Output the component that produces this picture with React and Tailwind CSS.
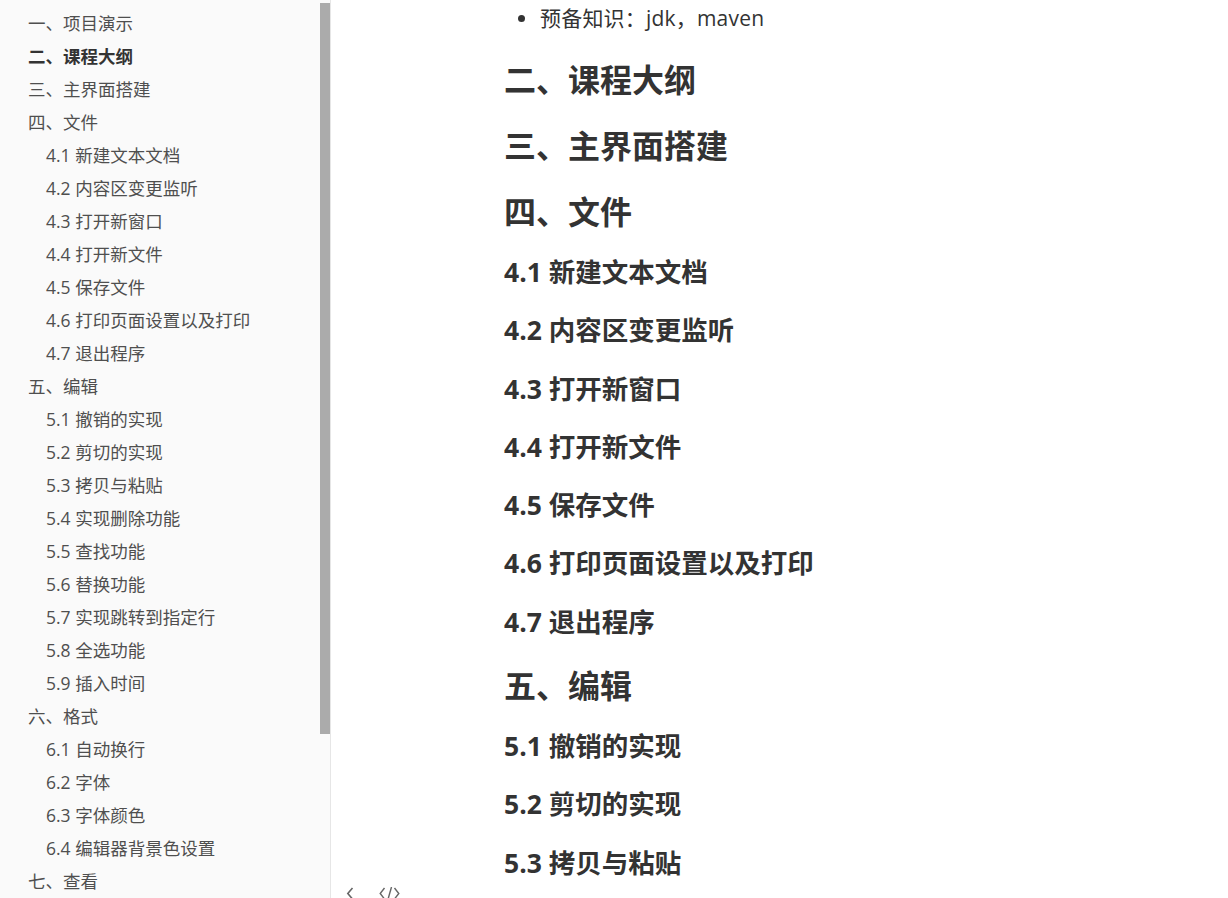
const toc = [
  { t: '一、项目演示', lv: 1 },
  { t: '二、课程大纲', lv: 1, active: true },
  { t: '三、主界面搭建', lv: 1 },
  { t: '四、文件', lv: 1 },
  { t: '4.1 新建文本文档', lv: 2 },
  { t: '4.2 内容区变更监听', lv: 2 },
  { t: '4.3 打开新窗口', lv: 2 },
  { t: '4.4 打开新文件', lv: 2 },
  { t: '4.5 保存文件', lv: 2 },
  { t: '4.6 打印页面设置以及打印', lv: 2 },
  { t: '4.7 退出程序', lv: 2 },
  { t: '五、编辑', lv: 1 },
  { t: '5.1 撤销的实现', lv: 2 },
  { t: '5.2 剪切的实现', lv: 2 },
  { t: '5.3 拷贝与粘贴', lv: 2 },
  { t: '5.4 实现删除功能', lv: 2 },
  { t: '5.5 查找功能', lv: 2 },
  { t: '5.6 替换功能', lv: 2 },
  { t: '5.7 实现跳转到指定行', lv: 2 },
  { t: '5.8 全选功能', lv: 2 },
  { t: '5.9 插入时间', lv: 2 },
  { t: '六、格式', lv: 1 },
  { t: '6.1 自动换行', lv: 2 },
  { t: '6.2 字体', lv: 2 },
  { t: '6.3 字体颜色', lv: 2 },
  { t: '6.4 编辑器背景色设置', lv: 2 },
  { t: '七、查看', lv: 1 },
];

const doc = [
  { t: '二、课程大纲', h: 2 },
  { t: '三、主界面搭建', h: 2 },
  { t: '四、文件', h: 2 },
  { t: '4.1 新建文本文档', h: 3 },
  { t: '4.2 内容区变更监听', h: 3 },
  { t: '4.3 打开新窗口', h: 3 },
  { t: '4.4 打开新文件', h: 3 },
  { t: '4.5 保存文件', h: 3 },
  { t: '4.6 打印页面设置以及打印', h: 3 },
  { t: '4.7 退出程序', h: 3 },
  { t: '五、编辑', h: 2 },
  { t: '5.1 撤销的实现', h: 3 },
  { t: '5.2 剪切的实现', h: 3 },
  { t: '5.3 拷贝与粘贴', h: 3 },
];

const font = "font-['Open_Sans','Noto_Sans_CJK_SC',sans-serif]";

export default function App() {
  return (
    <div className={`flex h-[898px] w-[1228px] overflow-hidden bg-white ${font}`}>
      {/* outline sidebar */}
      <aside className="flex w-[331px] shrink-0 border-r border-[#e6e6e6] bg-[#fafafa]">
        <ul className="flex-1 pt-[7px]">
          {toc.map(item => (
            <li key={item.t}
              className={`whitespace-nowrap text-[17.5px] leading-[33px] ${item.lv === 2 ? 'pl-[46px]' : 'pl-[28px]'} ${item.active ? 'font-bold text-[#333]' : 'text-[#4f4f4f]'}`}>
              {item.t}
            </li>
          ))}
        </ul>
        <div className="w-[10px] pt-[3px]">
          <div className="h-[731px] w-full bg-[#ababab]" />
        </div>
      </aside>

      {/* editor */}
      <main className="relative flex-1 overflow-hidden pl-[173px] text-[#333]">
        <ul className="mb-[9px]">
          <li className="flex items-center text-[21px] leading-[36px] tracking-[0.2px]">
            <span className="ml-[14px] mr-[15px] h-[7px] w-[7px] rounded-full bg-[#333]" />
            预备知识：jdk，maven
          </li>
        </ul>
        {doc.map(d => d.h === 2 ? (
          <h2 key={d.t} className="whitespace-nowrap pt-[4px] text-[32px] font-bold leading-[62px]">{d.t}</h2>
        ) : (
          <h3 key={d.t} className="whitespace-nowrap text-[26.5px] font-bold leading-[58.3px]">{d.t}</h3>
        ))}

        <div className="absolute bottom-0 left-0 right-0 flex h-[11px] items-start gap-[25px] pl-[15px] text-[#666]">
          <svg width="8" height="13" viewBox="0 0 8 13" fill="none" stroke="currentColor" strokeWidth="1.6">
            <path d="M6.5 1 L1.8 6.5 L6.5 12" />
          </svg>
          <svg width="21" height="13" viewBox="0 0 21 13" fill="none" stroke="currentColor" strokeWidth="1.4">
            <path d="M5.5 1 L1.2 6.5 L5.5 12" />
            <path d="M12.5 0 L8.8 13" />
            <path d="M15.5 1 L19.8 6.5 L15.5 12" />
          </svg>
        </div>
      </main>
    </div>
  );
}
